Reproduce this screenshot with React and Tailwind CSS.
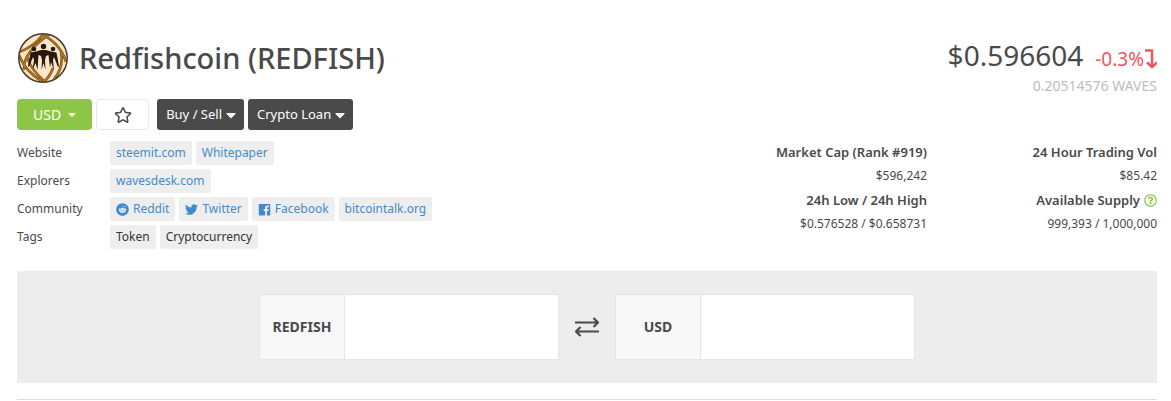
import React, { useState } from "react";
import {
  FaCaretDown,
  FaReddit,
  FaRegQuestionCircle,
  FaRegStar,
  FaTwitter,
} from "react-icons/fa";

const FacebookIcon = ({ className }) => (
  <svg className={`h-[1em] w-[1em] ${className}`} viewBox="0 0 13 13" fill="currentColor">
    <path d="M.8 1h11.400v11.400H9V8h1.500l.3-1.800H9V5.100c0-.6.3-.9.900-.9h1V2.600H9.400C7.900 2.600 7.100 3.500 7.100 4.900v1.300H5.700V8h1.400v4.400H.8z" />
  </svg>
);

const linkRows = [
  {
    label: "Website",
    links: [{ text: "steemit.com" }, { text: "Whitepaper" }],
  },
  { label: "Explorers", links: [{ text: "wavesdesk.com" }] },
  {
    label: "Community",
    links: [
      { text: "Reddit", icon: FaReddit },
      { text: "Twitter", icon: FaTwitter },
      { text: "Facebook", icon: FacebookIcon },
      { text: "bitcointalk.org" },
    ],
  },
];

const tags = ["Token", "Cryptocurrency"];

const stats = [
  { title: "Market Cap (Rank #919)", value: "$596,242" },
  { title: "24 Hour Trading Vol", value: "$85.42" },
  { title: "24h Low / 24h High", value: "$0.576528 / $0.658731" },
  { title: "Available Supply", value: "999,393 / 1,000,000", help: true },
];

const App = () => {
  return (
    <div className="pl-[17px] pr-[14px] pt-8 font-['Noto_Sans',sans-serif] text-[#4a4a4a]">
      <header className="flex items-start justify-between">
        <div className="flex items-center gap-[10px]">
          <CoinLogo />
          <h1 className="text-[29px] leading-[52px] font-medium">Redfishcoin (REDFISH)</h1>
        </div>
        <div className="text-right">
          <div className="flex items-baseline justify-end gap-3">
            <span className="text-[28px] leading-[46px]">$0.596604</span>
            <span className="flex items-center text-[19px] text-[#ef5461]">
              -0.3%
              <DownArrow />
            </span>
          </div>
          <div className="text-sm leading-4 text-[#bdbdbd]">0.20514576 WAVES</div>
        </div>
      </header>

      <div className="mt-[5px] flex items-center text-sm">
        <button className="flex h-[31px] items-center gap-[7px] rounded bg-[#8dc647] px-4 text-white">
          USD
          <span className="border-x-4 border-t-4 border-x-transparent border-t-white" />
        </button>
        <button
          aria-label="Add to favourites"
          className="ml-1 flex h-[31px] w-[53px] items-center justify-center rounded border border-[#e7e7e7] text-lg"
        >
          <FaRegStar />
        </button>
        <DarkButton className="ml-2">Buy / Sell</DarkButton>
        <DarkButton className="ml-1">Crypto Loan</DarkButton>
      </div>

      <div className="mt-[11px] flex items-start justify-between">
        <dl className="flex flex-col gap-1 text-xs leading-6">
          {linkRows.map((row) => (
            <div key={row.label} className="flex">
              <dt className="w-[93px]">{row.label}</dt>
              <dd className="flex gap-1">
                {row.links.map(({ text, icon: Icon }) => (
                  <a
                    key={text}
                    href="#"
                    className="flex items-center gap-1 rounded-xs bg-[#eee] px-[6px] text-[#428bca]"
                  >
                    {Icon && <Icon className="text-[13px]" />}
                    {text}
                  </a>
                ))}
              </dd>
            </div>
          ))}
          <div className="flex">
            <dt className="w-[93px]">Tags</dt>
            <dd className="flex gap-1">
              {tags.map((tag) => (
                <span key={tag} className="rounded-xs bg-[#eee] px-[6px] text-[#333]">
                  {tag}
                </span>
              ))}
            </dd>
          </div>
        </dl>

        <div className="grid w-[460px] grid-cols-2 text-right text-xs">
          {stats.map((s) => (
            <div key={s.title}>
              <div className="flex items-center justify-end gap-1 text-[13px] leading-[22px] font-semibold">
                {s.title}
                {s.help && <FaRegQuestionCircle className="text-[#8dc647]" />}
              </div>
              <div className="leading-[26px]">{s.value}</div>
            </div>
          ))}
        </div>
      </div>

      <Converter />

      <div className="mt-4 border-t border-[#ddd]" />
    </div>
  );
};

export default App;

const DarkButton = ({ className, children }) => (
  <button
    className={`flex h-[31px] items-center gap-1 rounded-[3px] bg-[#4a4a4a] pr-2 pl-[9px] text-[13px] text-white ${className}`}
  >
    {children}
    <FaCaretDown className="w-[10px] text-base" />
  </button>
);

const DownArrow = () => (
  <svg className="ml-px h-5 w-3" viewBox="0 0 12 20" fill="none" stroke="currentColor">
    <path d="M0 1.500H7V18" strokeWidth="2.500" />
    <path d="M2 13.500l5 4.500 5-4.500" strokeWidth="2.500" />
  </svg>
);

const Converter = () => {
  const [amount, setAmount] = useState("");
  const [price, setPrice] = useState("");

  return (
    <div className="mt-[22px] flex items-center justify-center bg-[#ededed] py-[23px]">
      <CurrencyField id="coin" label="REDFISH" value={amount} onChange={setAmount} />
      <svg className="mx-4 h-6 w-6" viewBox="0 0 24 24" fill="none" stroke="currentColor" strokeWidth="2.200">
        <path d="M0 7.500H23M18.500 3l4.500 4.500-4.500 4.500M24 16.500H1M5.500 12L1 16.500 5.500 21" />
      </svg>
      <CurrencyField id="fiat" label="USD" value={price} onChange={setPrice} />
    </div>
  );
};

const CurrencyField = ({ id, label, value, onChange }) => (
  <div className="flex h-[66px] w-[300px] border border-[#e5e5e5] bg-white">
    <label
      htmlFor={id}
      className="flex w-[85px] items-center justify-center border-r border-[#e5e5e5] bg-[#f8f8f8] text-sm font-bold"
    >
      {label}
    </label>
    <input
      id={id}
      type="text"
      value={value}
      onChange={(e) => onChange(e.target.value)}
      className="min-w-0 flex-1 px-3 outline-none"
    />
  </div>
);

const bands =
  "M2 20C11 17 20 11 27 1M7 38C6 24 18 12 33 2M24 2C34 6 45 16 49 30M2 23C6 34 14 43 26 50M10 24C12 34 19 42 28 50M37 47C43 40 46 30 44 20M27 50C31 46 34 42 36 36";

const CoinLogo = () => (
  <svg className="h-[52px] w-[52px]" viewBox="0 0 52 52" fill="none">
    <defs>
      <clipPath id="coin-clip">
        <circle cx="26" cy="26" r="24" />
      </clipPath>
    </defs>
    <circle cx="26" cy="26" r="24" fill="#fbe6cb" />
    <g clipPath="url(#coin-clip)">
      {/* woven bands */}
      <path d={bands} stroke="#7a4d14" strokeWidth="2.600" />
      <path d={bands} stroke="#b07a26" strokeWidth="1.300" />
      {/* three figures */}
      <g fill="#2a1a0c">
        <circle cx="17" cy="17" r="2.300" />
        <circle cx="26.500" cy="14.500" r="2.700" />
        <circle cx="36" cy="17" r="2.300" />
        <path d="M13.500 20.500L19 19.500l5-1.500h5l5 1.500 5.500 1L42 34l-1 1-4-10-1 3 1 10-3-8-1 6 -1.500-13L29 24l-1 4 .500 10-2-7-2 7 .500-10-1-4-2.500-1-1 15-2-7-3 7 1.500-10-1-3-4 10-1-1z" />
      </g>
    </g>
    <circle cx="26" cy="26" r="24.200" stroke="#4a3a26" strokeWidth="1.500" />
  </svg>
);
